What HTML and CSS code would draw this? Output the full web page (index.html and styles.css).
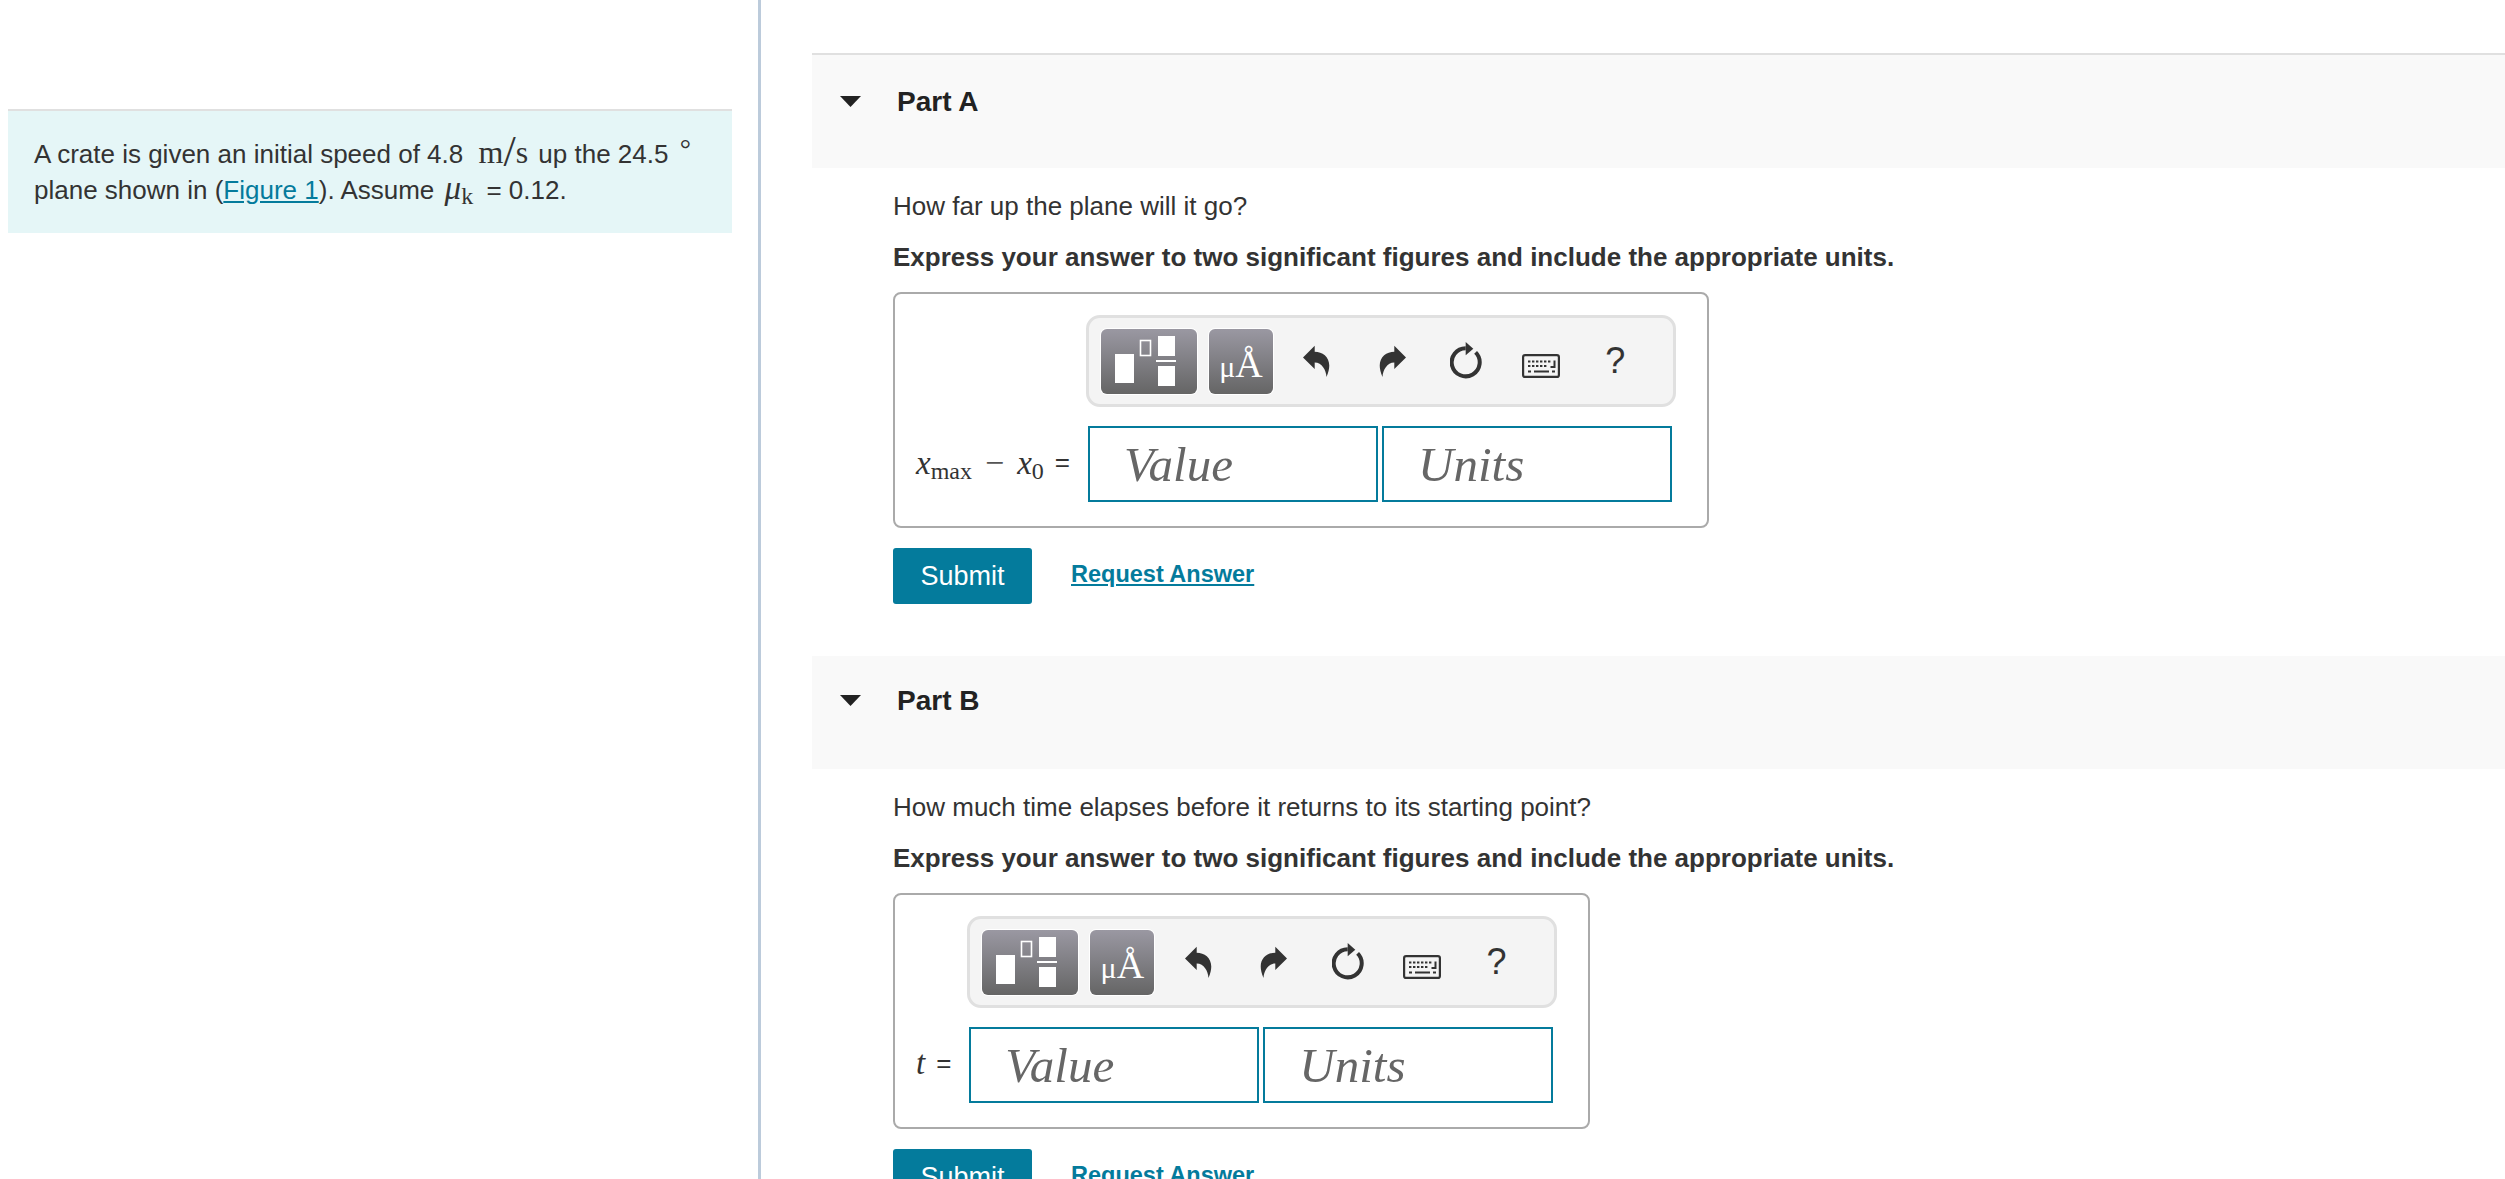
FILE: index.html
```html
<!DOCTYPE html>
<html>
<head>
    <meta name="viewport" content="width=device-width, initial-scale=1">
    <title>Crate on a plane</title>
    <link rel="stylesheet" href="styles.css">
</head>
<body>
    <svg class="icon-defs" width="0" height="0">
        <symbol id="ic-templates" viewBox="0 0 96 65">
            <rect x="14" y="25" width="19" height="29" fill="#fff"/>
            <rect x="39.5" y="11.5" width="10" height="15" fill="none" stroke="#fff" stroke-width="1.6"/>
            <rect x="57" y="7" width="17" height="20" fill="#fff"/>
            <rect x="55" y="31" width="20" height="2" fill="#fff"/>
            <rect x="57" y="37" width="17" height="20" fill="#fff"/>
        </symbol>
        <symbol id="ic-undo" viewBox="0 0 28 32">
            <path d="M0 12.500 L11.700 .7 V6.700 C22 7 31 15 23.500 32 C23 25 19 17.500 11.700 17.500 V24 Z" fill="#333"/>
        </symbol>
        <symbol id="ic-reset" viewBox="0 0 32 38">
            <path d="M15.700 6.300 A14 14 0 1 0 25.600 10.400" fill="none" stroke="#333" stroke-width="4"/>
            <path d="M15.700 0 L23.300 6.700 L15.700 13.300 Z" fill="#333"/>
        </symbol>
        <symbol id="ic-keyboard" viewBox="0 0 38 24">
            <rect x="1.100" y="1.100" width="35.800" height="21.800" rx="2" fill="#f4f4f4" stroke="#333" stroke-width="2.200"/>
            <path d="M6 7.500h24M6 12h20" stroke="#333" stroke-width="2" stroke-dasharray="2.400 1.600"/>
            <path d="M32.500 6.500v6.500h-4" fill="none" stroke="#333" stroke-width="2"/>
            <path d="M6 17.500h3M12 17.500h15M30 17.500h3" stroke="#333" stroke-width="2"/>
        </symbol>
    </svg>

    <div class="layout">
        <aside class="intro">
            <div class="intro-box">
                <p>A crate is given an initial speed of 4.8 <span class="math unit">m<span class="slash">/</span>s</span> up the 24.5 <span class="deg">°</span><br>plane shown in (<a href="#">Figure 1</a>). Assume <span class="math mu"><i>μ</i><sub>k</sub></span> <span class="eq">= 0.12.</span></p>
            </div>
        </aside>

        <main class="parts">
            <section class="part">
                <div class="part-header first">
                    <svg class="caret" viewBox="0 0 21 11"><path d="M0 0 H21 L10.500 11 Z"/></svg>
                    <h3>Part A</h3>
                </div>
                <div class="part-body">
                    <p class="question">How far up the plane will it go?</p>
                    <p class="instruction">Express your answer to two significant figures and include the appropriate units.</p>
                    <div class="answer-box">
                        <div class="label"><span class="math"><i>x</i><sub>max</sub><span class="minus">−</span><i>x</i><sub>0</sub></span><span class="eq-sign">=</span></div>
                        <div class="editor">
                            <div class="toolbar">
                                <div class="tool-btn wide"><svg><use href="#ic-templates"/></svg></div>
                                <div class="tool-btn units"><span class="mu-small">μ</span>Å</div>
                                <div class="tool first-tool"><svg class="undo"><use href="#ic-undo"/></svg></div>
                                <div class="tool"><svg class="undo flip"><use href="#ic-undo"/></svg></div>
                                <div class="tool"><svg class="reset"><use href="#ic-reset"/></svg></div>
                                <div class="tool"><svg class="keyboard"><use href="#ic-keyboard"/></svg></div>
                                <div class="tool help">?</div>
                            </div>
                            <div class="inputs">
                                <input type="text" placeholder="Value">
                                <input type="text" placeholder="Units">
                            </div>
                        </div>
                    </div>
                    <div class="actions">
                        <button class="submit-btn">Submit</button>
                        <a class="request-link" href="#">Request Answer</a>
                    </div>
                </div>
            </section>

            <section class="part">
                <div class="part-header">
                    <svg class="caret" viewBox="0 0 21 11"><path d="M0 0 H21 L10.500 11 Z"/></svg>
                    <h3>Part B</h3>
                </div>
                <div class="part-body">
                    <p class="question">How much time elapses before it returns to its starting point?</p>
                    <p class="instruction">Express your answer to two significant figures and include the appropriate units.</p>
                    <div class="answer-box">
                        <div class="label"><span class="math"><i>t</i></span><span class="eq-sign">=</span></div>
                        <div class="editor">
                            <div class="toolbar">
                                <div class="tool-btn wide"><svg><use href="#ic-templates"/></svg></div>
                                <div class="tool-btn units"><span class="mu-small">μ</span>Å</div>
                                <div class="tool first-tool"><svg class="undo"><use href="#ic-undo"/></svg></div>
                                <div class="tool"><svg class="undo flip"><use href="#ic-undo"/></svg></div>
                                <div class="tool"><svg class="reset"><use href="#ic-reset"/></svg></div>
                                <div class="tool"><svg class="keyboard"><use href="#ic-keyboard"/></svg></div>
                                <div class="tool help">?</div>
                            </div>
                            <div class="inputs">
                                <input type="text" placeholder="Value">
                                <input type="text" placeholder="Units">
                            </div>
                        </div>
                    </div>
                    <div class="actions">
                        <button class="submit-btn">Submit</button>
                        <a class="request-link" href="#">Request Answer</a>
                    </div>
                </div>
            </section>
        </main>
    </div>
</body>
</html>
```

FILE: styles.css
```css
* {
    box-sizing: border-box;
}

html, body {
    height: 100%;
}

body {
    margin: 0;
    overflow: hidden;
    background: white;
    color: #333;
    font-family: "Liberation Sans", Arial, sans-serif;
    font-size: 26px;
}

.icon-defs {
    position: absolute;
}

.layout {
    display: flex;
    height: 1179px;
}

.intro {
    flex: none;
    width: 761px;
    padding: 109px 26px 0 8px;
    border-right: 3px solid #bccbdb;
}

.intro-box {
    height: 124px;
    padding: 25px 26px 0;
    background: #e5f6f7;
    border-top: 2px solid #e0e0e0;
}

.intro-box p {
    margin: 0;
    line-height: 36px;
    white-space: nowrap;
}

.intro-box a {
    color: #047b9c;
}

.math {
    font-family: "Liberation Serif", "Times New Roman", serif;
    font-size: 33px;
    line-height: 1;
}

.math sub {
    font-size: 24px;
    line-height: 0;
    vertical-align: -5px;
}

.unit {
    margin: 0 3px 0 8px;
    font-size: 32px;
}

.slash {
    font-size: 44px;
    font-weight: normal;
    line-height: 0;
    vertical-align: -3px;
}

.deg {
    margin-left: 4px;
    font-family: "Liberation Serif", serif;
    font-size: 28px;
    line-height: 0;
    vertical-align: 5px;
}

.mu {
    margin-left: 3px;
}

.eq {
    margin-left: 6px;
}

.parts {
    flex: 1;
    min-width: 0;
    padding: 53px 0 0 51px;
}

.part-header {
    display: flex;
    height: 113px;
    padding: 29px 0 0 28px;
    background: #f9f9f9;
}

.part-header.first {
    height: 115px;
    padding-top: 31px;
    border-top: 2px solid #e0e0e0;
}

.caret {
    flex: none;
    width: 21px;
    height: 11px;
    margin: 10px 36px 0 0;
    fill: #222;
}

.part-header h3 {
    margin: 0;
    color: #222;
    font-size: 28px;
    line-height: 32px;
}

.part-body {
    padding: 22px 0 52px 81px;
}

.question {
    margin: 0 0 19px;
    line-height: 32px;
}

.instruction {
    margin: 0 0 19px;
    font-weight: bold;
    line-height: 32px;
}

.answer-box {
    display: flex;
    width: fit-content;
    padding: 21px 31px 24px 21px;
    border: 2px solid #aaa;
    border-radius: 8px;
}

.label {
    display: flex;
    align-items: center;
    gap: 11px;
    height: 76px;
    margin: auto 16px 0 0;
    padding-bottom: 3px;
    white-space: nowrap;
}

.minus {
    margin: 0 13px;
    color: #555;
    font-size: 34px;
}

.eq-sign {
    font-size: 26px;
}

.editor {
    width: 590px;
}

.toolbar {
    display: flex;
    align-items: center;
    height: 92px;
    padding: 0 12px;
    background: #f4f4f4;
    border: 3px solid #e0e0e0;
    border-radius: 14px;
}

.tool-btn {
    flex: none;
    height: 65px;
    margin-right: 12px;
    background: linear-gradient(#9a98a2, #656565);
    border-radius: 6px;
    box-shadow: 0 0 0 1px white;
}

.tool-btn.wide {
    width: 96px;
}

.tool-btn.wide svg {
    display: block;
    width: 96px;
    height: 65px;
}

.tool-btn.units {
    width: 64px;
    margin-right: 0;
    color: white;
    font-family: "Liberation Serif", serif;
    font-size: 38px;
    line-height: 70px;
    text-align: center;
}

.mu-small {
    font-size: 30px;
}

.tool {
    display: flex;
    flex: none;
    justify-content: center;
    width: 74.500px;
}

.first-tool {
    margin-left: 7px;
}

.undo {
    width: 28px;
    height: 32px;
}

.flip {
    transform: scaleX(-1);
}

.reset {
    width: 32px;
    height: 38px;
}

.keyboard {
    width: 38px;
    height: 24px;
    margin-top: 10px;
}

.help {
    font-size: 36px;
}

.inputs {
    display: flex;
    gap: 4px;
    margin: 19px 0 0 2px;
}

.inputs input {
    width: 290px;
    height: 76px;
    padding: 0 0 0 34px;
    background: white;
    border: 2px solid #047b9c;
    border-radius: 0;
    font-family: "Liberation Serif", "Times New Roman", serif;
    font-size: 49px;
    font-style: italic;
}

.inputs input::placeholder {
    color: #666;
    opacity: 1;
}

.actions {
    display: flex;
    align-items: center;
    gap: 39px;
    margin-top: 20px;
}

.submit-btn {
    width: 139px;
    height: 56px;
    padding: 0;
    background-color: #047b9c;
    border: none;
    border-radius: 3px;
    color: white;
    font-family: inherit;
    font-size: 27px;
}

.request-link {
    position: relative;
    top: -2px;
    color: #047b9c;
    font-size: 23.500px;
    font-weight: bold;
}
```
